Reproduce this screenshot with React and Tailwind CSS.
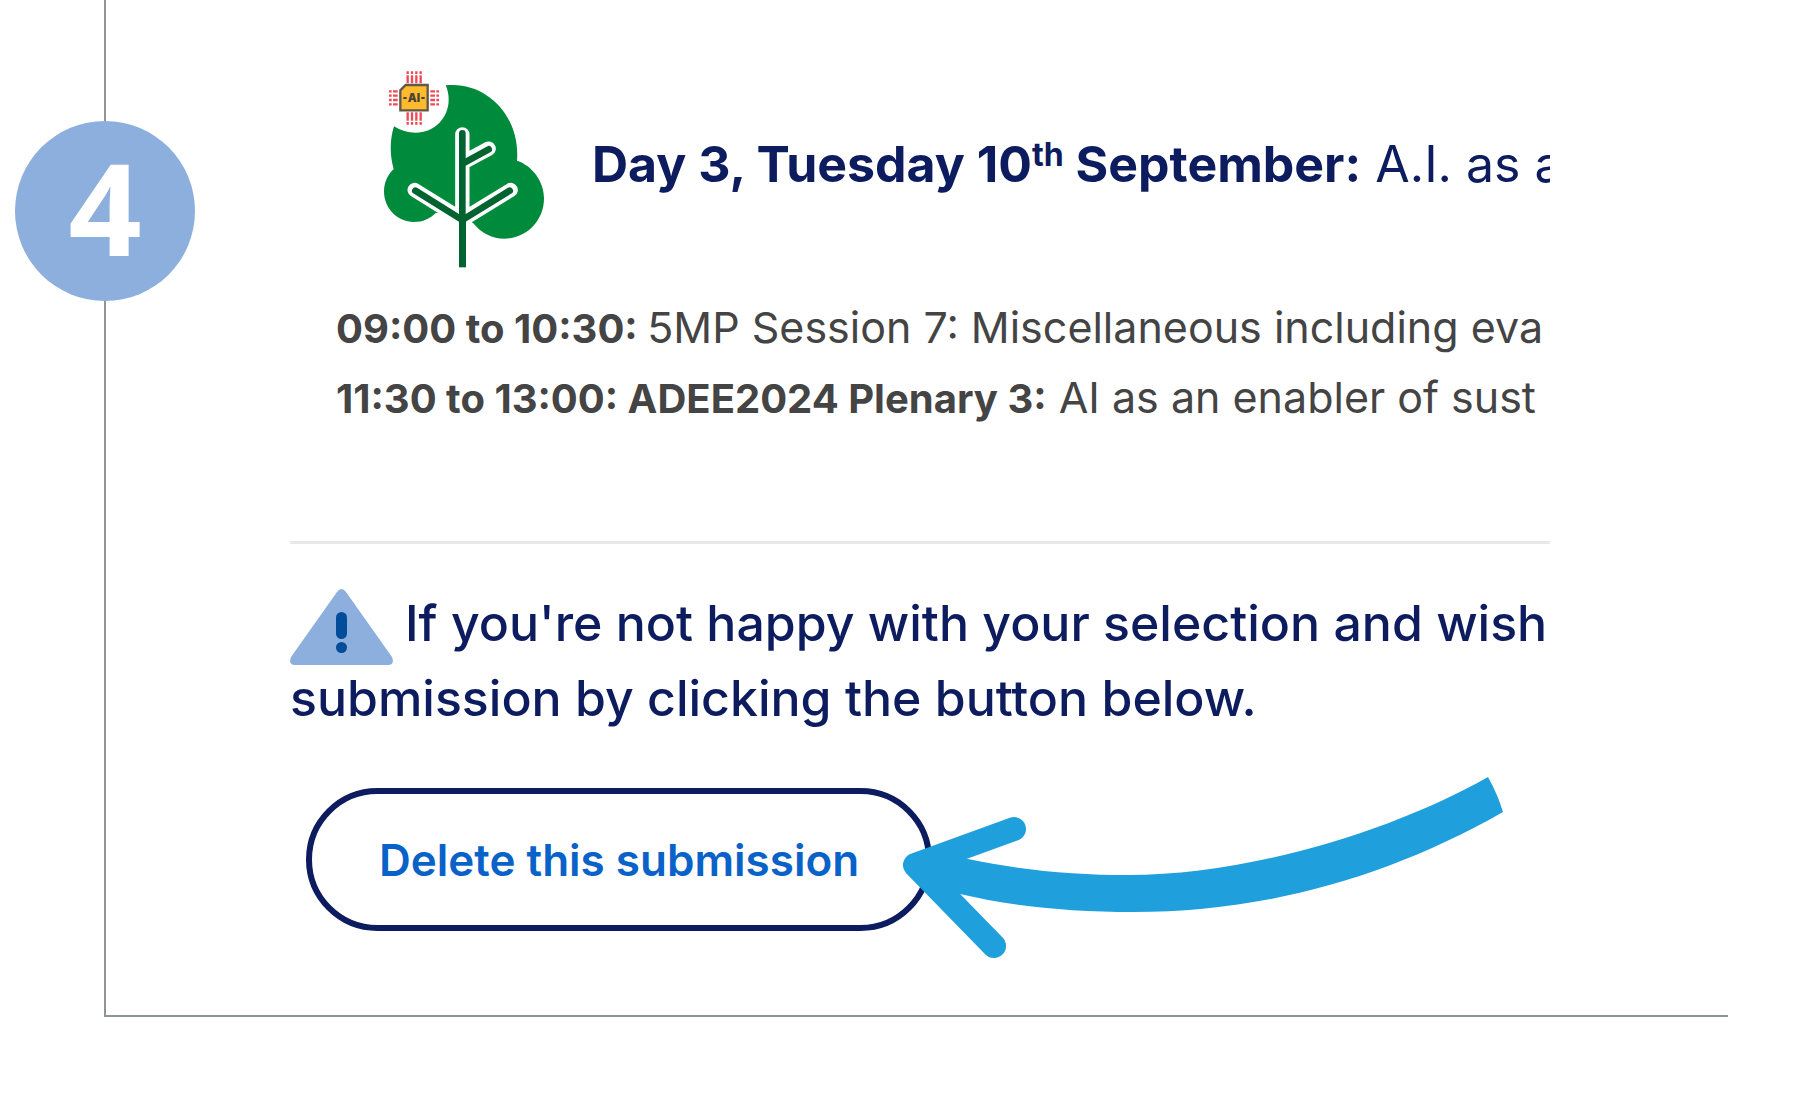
import React from "react";

const sessions = [
  {
    time: "09:00 to 10:30:",
    label: "",
    title: "5MP Session 7: Miscellaneous including eva",
  },
  {
    time: "11:30 to 13:00:",
    label: "ADEE2024 Plenary 3:",
    title: "AI as an enabler of sust",
  },
];

function StepBadge({ number }) {
  return (
    <div className="absolute -left-[91px] top-[121px] flex size-[180px] items-center justify-center rounded-full bg-[#8cafdd] pb-2 font-['Open_Sans'] text-[128px] leading-none font-bold text-white">
      {number}
    </div>
  );
}

function TreeLogo() {
  return (
    <svg
      viewBox="-102 0 768 660"
      className="h-[220px] w-64 shrink-0"
      role="img"
      aria-label="AI tree"
    >
      {/* Crown */}
      <path
        d="M227 76C345 62 452 165 441 302C487 317 522 364 522 415C522 482 470 536 403 536C367 536 335 520 312 492L278 470L197 459C181 476 158 486 132 486C82 486 42 445 42 394C42 368 53 344 71 327C59 285 59 240 72 199C91 212 113 218 137 218C192 218 236 174 236 119C236 104 233 89 227 76Z"
        fill="#008a3b"
      />
      {/* Gap between the two lower lobes */}
      <path d="M197 459L255 496V530H298V500L312 492L278 466Z" fill="#fefefe" />
      {/* Branches */}
      <g fill="none" strokeLinecap="round" strokeLinejoin="round">
        <path
          d="M277 223V478M278 308L356 266M134 390L277 479L422 390"
          stroke="#fefefe"
          strokeWidth="43"
        />
        <path
          d="M277 220V480M278 311L356 268M136 392L277 480L419 392"
          stroke="#006330"
          strokeWidth="20"
        />
      </g>
      <path d="M267 470H288V622H267Z" fill="#006330" />
      {/* Chip */}
      <g stroke="#ee4b56" strokeWidth="7">
        <path
          d="M113 34V70M126 34V70M139 34V70M152 34V70M113 194V157M126 194V157M139 194V157M152 194V157"
          strokeDasharray="8 4 30"
        />
        <path
          d="M57 94H86M57 107H86M57 120H86M57 133H86M207 94H178M207 107H178M207 120H178M207 133H178"
          strokeDasharray="8 4 14 4"
        />
      </g>
      <path
        d="M107 75H173V151H91V91Z"
        fill="#fdbb2d"
        stroke="#635749"
        strokeWidth="7"
      />
      <path d="M100 114H110M154 114H164" stroke="#4d4237" strokeWidth="6" />
      <text
        x="132"
        y="126"
        textAnchor="middle"
        fontFamily="Inter, sans-serif"
        fontSize="34"
        fontWeight="900"
        fill="#4d4237"
      >
        AI
      </text>
    </svg>
  );
}

function WarningIcon() {
  return (
    <svg
      viewBox="0 0 103 76"
      className="mr-3 -mb-2 inline-block h-[76px] w-[103px] align-[-16px]"
      aria-hidden="true"
    >
      <path
        d="M47 3Q51.500 -3 56 3L102 68Q105 76 98 76H5Q-2 76 1 68Z"
        fill="#8cafdd"
      />
      <rect x="46" y="23" width="11" height="27" rx="5.500" fill="#034c9a" />
      <circle cx="51.500" cy="58.500" r="5.500" fill="#034c9a" />
    </svg>
  );
}

function Arrow() {
  return (
    <svg
      viewBox="890 760 640 220"
      className="pointer-events-none absolute -top-7 left-[600px] h-[220px] w-[640px]"
      aria-hidden="true"
    >
      <path
        d="M930 850L968 859C1020 870 1075 875 1128 875C1250 875 1395 830 1488 777Q1498 795 1503 812C1385 879 1262 912 1133 912C1070 912 1010 906 960 894L920 880Z"
        fill="#1fa0dd"
      />
      <path
        d="M1014 829L915 865L994 946"
        fill="none"
        stroke="#1fa0dd"
        strokeWidth="24"
        strokeLinecap="round"
        strokeLinejoin="round"
      />
    </svg>
  );
}

export default function App() {
  return (
    <div className="min-h-screen bg-white font-[Inter,sans-serif] text-[#0c1c5e]">
      <section className="relative mr-[72px] ml-[104px] border-b-2 border-l-2 border-[#8f9496] pt-[60px] pr-[178px] pb-[84px] pl-[184px]">
        <StepBadge number={4} />

        {/* Programme */}
        <div className="pl-[46px]">
          <div className="flex items-center overflow-hidden whitespace-nowrap">
            <TreeLogo />
            <h2 className="pb-3 text-[50px] leading-[75px]">
              <strong className="font-bold">
                Day 3, Tuesday 10<sup className="text-[32px]">th</sup> September:
              </strong>{" "}
              A.I. as a
            </h2>
          </div>

          <div className="mt-[13px] overflow-hidden text-[43px] leading-[69px] whitespace-nowrap text-[#444444]">
            {sessions.map((session) => (
              <p key={session.time}>
                <strong className="text-[40px] font-bold">
                  {session.time} {session.label}
                </strong>{" "}
                {session.title}
              </p>
            ))}
          </div>
        </div>

        <hr className="mt-[108px] border-t-[3px] border-[#e8e8e8]" />

        <p className="mt-[42px] text-[50px] leading-[75px] font-medium whitespace-nowrap">
          <WarningIcon />
          If you're not happy with your selection and wish
          <br />
          submission by clicking the button below.
        </p>

        {/* Delete action */}
        <div className="relative mt-[52px] pl-4">
          <button
            type="button"
            className="h-[143px] rounded-full border-6 border-[#0c1c5e] px-[67px] text-[44px] font-semibold text-[#0962c8]"
          >
            Delete this submission
          </button>
          <Arrow />
        </div>
      </section>
    </div>
  );
}
